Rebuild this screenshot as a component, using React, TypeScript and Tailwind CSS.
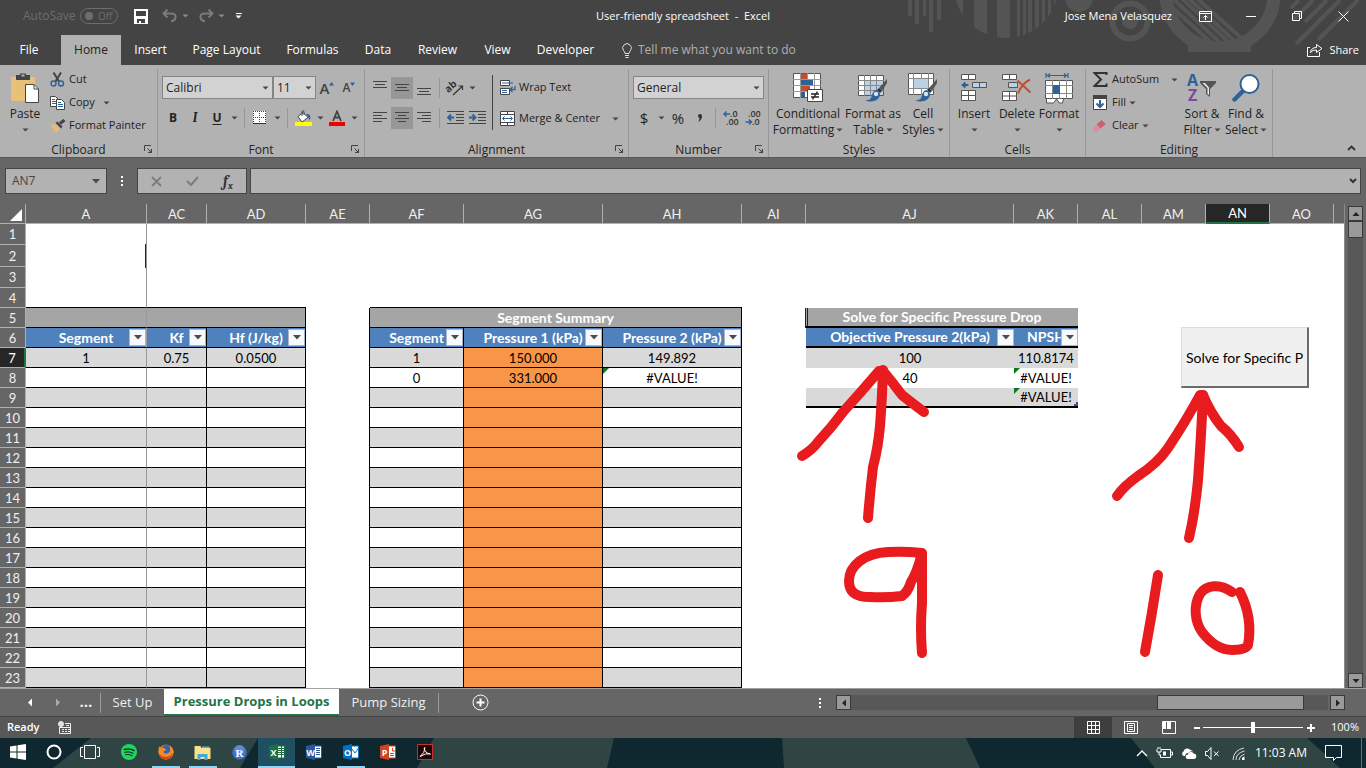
import React from "react";

type Kids = { children?: React.ReactNode };

const Caret = ({ className = "text-[#444]" }: { className?: string }) => (
  <svg width="7" height="4" viewBox="0 0 7 4" className={`shrink-0 ${className}`}>
    <path d="M0.5 0.5h6L3.5 3.5z" fill="currentColor" />
  </svg>
);

const WideCaret = () => (
  <svg width="8" height="5" viewBox="0 0 8 5" className="shrink-0">
    <path d="M0 0h8L4 4.500z" fill="#4a4a4a" />
  </svg>
);

const CaretButton = ({ label }: { label: string }) => (
  <button aria-label={label} className="flex h-[22px] w-3 items-center justify-center">
    <Caret />
  </button>
);

const ToolButton = ({ label, active, children }: Kids & { label: string; active?: boolean }) => (
  <button
    aria-label={label}
    className={`flex h-[22px] w-[22px] items-center justify-center ${active ? "bg-[#979797]" : ""}`}
  >
    {children}
  </button>
);

const Sep = () => <span className="mx-1 h-5 w-px shrink-0 bg-[#979797]" />;

const Group = ({
  label,
  width,
  launcher,
  children,
}: Kids & { label: string; width: string; launcher?: boolean }) => (
  <section aria-label={label} className={`flex shrink-0 flex-col ${width}`}>
    <div className="flex flex-1">
      <div className="flex min-w-0 flex-1">{children}</div>
      <span className="mt-1 w-px bg-[#989898]" />
    </div>
    <div className="flex h-[17px] items-center border-r border-[#989898] pt-[2px]">
      <span className="w-4" />
      <span className="flex-1 text-center leading-4">{label}</span>
      <span className="flex w-4 items-center">
        {launcher && (
          <button aria-label={`${label} settings`}>
            <svg width="9" height="9" viewBox="0 0 9 9" fill="none" stroke="#444" className="ml-[3px]">
              <path d="M0.5 6V0.5H7M3.5 3.5l4 4M7.5 4v3.5H4" />
              <path d="M8 4.5V8H4.5z" fill="#444" stroke="none" />
            </svg>
          </button>
        )}
      </span>
    </div>
  </section>
);

const BigButton = ({
  icon,
  lines,
  width,
}: {
  icon: React.ReactNode;
  lines: [string, string?];
  width: string;
}) => (
  <button className={`flex shrink-0 flex-col items-center pt-[7px] ${width}`}>
    <span className="flex h-8 items-center justify-center">{icon}</span>
    <span className="mt-[2px] h-4 leading-4 whitespace-nowrap">{lines[0]}</span>
    <span className="flex h-4 items-center gap-[2px] leading-4 whitespace-nowrap">
      {lines[1]}
      <Caret />
    </span>
  </button>
);

const RowButton = ({ icon, label, caret }: { icon: React.ReactNode; label: string; caret?: string }) => (
  <button className="flex h-[23px] items-center text-[11px] whitespace-nowrap">
    <span className="flex w-[19px] justify-start">{icon}</span>
    {label}
    {caret && (
      <span className={caret}>
        <Caret />
      </span>
    )}
  </button>
);

const Lines = ({ rows }: { rows: [number, number, number][] }) => (
  <svg width="14" height="14" viewBox="0 0 14 14" stroke="#444">
    {rows.map(([x1, x2, y]) => (
      <path key={y} d={`M${x1} ${y + 0.5}H${x2}`} />
    ))}
  </svg>
);

/* ---------- ribbon icons ---------- */

const PasteIcon = () => (
  <svg width="30" height="32" viewBox="0 0 30 32">
    <path d="M1 5h24v24H1z" fill="#e8c078" />
    <path d="M6 3h4V1.500h6V3h4v5H6z" fill="#444" />
    <path d="M11.500 2.500h3v2h-3z" fill="#b2b2b2" />
    <path d="M15.500 12.500h8.500l4.500 4.500v13.500h-13z" fill="#fff" stroke="#444" />
    <path d="M24 12.500V17h4.500" fill="none" stroke="#444" />
  </svg>
);

const CutIcon = () => (
  <svg width="15" height="15" viewBox="0 0 15 15" fill="none">
    <path d="M3.500 0.500l5.500 9M11 0.500L5.500 9.500" stroke="#444" strokeWidth="2" />
    <circle cx="3.500" cy="11.500" r="2.500" stroke="#2e6197" strokeWidth="1.400" />
    <circle cx="11" cy="11.500" r="2.500" stroke="#2e6197" strokeWidth="1.400" />
  </svg>
);

const CopyIcon = () => (
  <svg width="15" height="14" viewBox="0 0 15 14">
    <path d="M0.500 0.500h5l2.500 2.500v7.500h-7.500z" fill="#fff" stroke="#444" />
    <path d="M2 3.500h3M2 5.500h4M2 7.500h4" stroke="#2e6197" />
    <path d="M6.500 3.500h5l3 3v7h-8z" fill="#fff" stroke="#444" />
    <path d="M8 6.500h3M8 8.500h5M8 10.500h5" stroke="#2e6197" />
  </svg>
);

const PainterIcon = () => (
  <svg width="16" height="14" viewBox="0 0 16 14">
    <path d="M0 6l6-1 4 5-4 4z" fill="#e8b877" />
    <path d="M5.500 4l2-1.500 5 5-1.500 2z" fill="#444" />
    <path d="M10 4.500L14.500 1" stroke="#444" strokeWidth="3" />
  </svg>
);

const BucketIcon = () => (
  <svg width="17" height="16" viewBox="0 0 17 16">
    <path d="M3 6.500l5-4 5 5-6 4.500z" fill="#fff" stroke="#444" />
    <path d="M7 6V1.500q1-1.500 2 0V5" fill="none" stroke="#444" />
    <path d="M11 4c4-.5 5 2 4 6-1.500-1-1.500-3-4-6z" fill="#2e6197" />
    <path d="M0 12h17v4H0z" fill="#ffff00" />
  </svg>
);

const FontColorIcon = () => (
  <svg width="16" height="16" viewBox="0 0 16 16">
    <path d="M4 11L8 1.500 12 11M5.500 7.500h5" fill="none" stroke="#444" strokeWidth="1.800" />
    <path d="M0 12h16v4H0z" fill="#f00000" />
  </svg>
);

const BorderIcon = () => (
  <svg width="14" height="14" viewBox="0 0 14 14">
    <path d="M0 0h13v12H0z" fill="#fff" />
    <path d="M0.500 0v12M6.500 0v12M12.500 0v12M0 0.500h13M0 6.500h13" stroke="#444" strokeDasharray="1 1" />
    <path d="M0 12.500h13" stroke="#333" />
  </svg>
);

const OrientIcon = () => (
  <svg width="18" height="17" viewBox="0 0 18 17" className="overflow-visible">
    <text x="0" y="12" fontSize="10" fontWeight="700" fill="#333" fontFamily="Open Sans, sans-serif" transform="rotate(-42 4 10)">
      ab
    </text>
    <path d="M7 16l9-8.500M12.500 7h4v4" stroke="#333" strokeWidth="1.200" fill="none" />
  </svg>
);

const IndentIcon = ({ right }: { right?: boolean }) => (
  <svg width="17" height="14" viewBox="0 0 17 14" fill="none">
    <path d="M0 .5h17M9 3.500h8M9 6.500h8M9 9.500h8M0 12.500h17" stroke="#444" />
    <path d={right ? "M0 6.500h6M3.500 3.500l3 3-3 3" : "M1 6.500h6M4 3.500l-3 3 3 3"} stroke="#2e6197" strokeWidth="1.800" />
  </svg>
);

const WrapIcon = () => (
  <svg width="16" height="16" viewBox="0 0 16 16">
    <path d="M0.500 0.500h9v5h-9zM0.500 8.500h9v6h-9z" fill="#fff" stroke="#444" />
    <path d="M2 3h11M2 10.500h5M2 12.500h5" stroke="#2e6197" />
    <path d="M15 6v3.500H10.500M12.500 7l-2.500 2.500 2.500 2.500" fill="none" stroke="#2e6197" strokeWidth="1.300" />
  </svg>
);

const MergeIcon = () => (
  <svg width="16" height="15" viewBox="0 0 16 15">
    <path d="M0.500 0.500h14v14h-14z" fill="#fff" stroke="#444" />
    <path d="M0 3.500h15M0 11.500h15M7.500 0v3.500M7.500 11.500V15" stroke="#444" />
    <path d="M2.500 7.500h10M4.500 5.500l-2 2 2 2M10.500 5.500l2 2-2 2" fill="none" stroke="#2e6197" />
  </svg>
);

const DecimalIcon = ({ more }: { more?: boolean }) => (
  <svg width="16" height="16" viewBox="0 0 16 16" fontFamily="Open Sans, sans-serif" fontSize="9" fontWeight="600" fill="#333">
    <text x={more ? 7 : 3} y="7">{more ? ".0" : ".00"}</text>
    <text x={more ? 3 : 7} y="15">{more ? ".00" : ".0"}</text>
    <path
      d={more ? "M1 4h6M3.500 1.500L1 4l2.500 2.500" : "M0.500 12h6M4 9.500L6.500 12 4 14.500"}
      fill="none"
      stroke="#2e6197"
      strokeWidth="1.400"
    />
  </svg>
);

const ConditionalIcon = () => (
  <svg width="30" height="30" viewBox="0 0 30 30">
    <path d="M0.500 0.500h27v24h-27z" fill="#fff" stroke="#555" />
    <path d="M7.500 0v25M14.500 0v25M21.500 0v25M0 6.500h28M0 12.500h28M0 18.500h28" stroke="#999" />
    <path d="M8 1h6v5H8zM8 13h9v5H8z" fill="#c0502c" />
    <path d="M8 7h12v5H8zM8 19h4v5H8z" fill="#2e6197" />
    <path d="M14.500 16.500h15v12h-15z" fill="#fff" stroke="#444" />
    <path d="M18 21h8M18 24h8M24.500 18.500l-5 8" stroke="#222" strokeWidth="1.400" />
  </svg>
);

const Brush = () => (
  <>
    <path d="M29 6l-8 9 3 3 5-8z" fill="#555" />
    <path d="M21 15l-2 2 3 3 2-2z" fill="#333" />
    <path d="M19 17c-4 0-4 3-6 8-1 2-3 2-6 2.500 6 2 15 1 15-7z" fill="#2e6197" />
    <circle cx="18" cy="21" r="2.200" fill="#d5e4f2" />
  </>
);

const FormatTableIcon = () => (
  <svg width="30" height="30" viewBox="0 0 30 30">
    <path d="M0.500 2.500h25v20h-25z" fill="#fff" stroke="#555" />
    <path d="M7 8h18v14H7z" fill="#bcd0e6" />
    <path d="M6.500 2v21M12.500 2v21M18.500 2v21M0 7.500h26M0 12.500h26M0 17.500h26" stroke="#888" />
    <Brush />
  </svg>
);

const CellStylesIcon = () => (
  <svg width="30" height="30" viewBox="0 0 30 30">
    <path d="M0.500 0.500h25v21h-25z" fill="#fff" stroke="#555" />
    <path d="M5.500 0v22M20.500 0v22M0 5.500h26M0 15.500h26M13.500 0v5M13.500 16v6" stroke="#888" />
    <path d="M6 6h14v9H6z" fill="#bcd0e6" />
    <Brush />
  </svg>
);

const InsertIcon = () => (
  <svg width="28" height="28" viewBox="0 0 28 28">
    <path d="M1.500 0.500h14v5h-14zM1.500 16.500h14v10h-14z" fill="#fff" stroke="#555" />
    <path d="M8.500 0v5M8.500 16v11M1 21.500h15" stroke="#555" />
    <path d="M12.500 8.500h14v5h-14z" fill="#bcd0e6" stroke="#555" />
    <path d="M19.500 8v6" stroke="#555" />
    <path d="M2.500 11h6M5.500 8.500L2.500 11l3 2.500" fill="none" stroke="#2e6197" strokeWidth="1.800" />
  </svg>
);

const DeleteIcon = () => (
  <svg width="30" height="28" viewBox="0 0 30 28">
    <path d="M0.500 0.500h14v5h-14zM0.500 17.500h14v9h-14z" fill="#fff" stroke="#555" />
    <path d="M7.500 0v5M7.500 17v10M0 22h15" stroke="#555" />
    <path d="M6.500 8.500h9v5h-9z" fill="#bcd0e6" stroke="#555" />
    <path d="M15.500 6.500l13 12M28 5.500q-8 4-12 14" fill="none" stroke="#c0502c" strokeWidth="2" />
  </svg>
);

const FormatIcon = () => (
  <svg width="28" height="31" viewBox="0 0 28 31">
    <path d="M1 0v5M23 0v5M2 2.500h20M5 0.500L2.500 2.500 5 4.500M19 0.500l2.500 2-2.500 2" fill="none" stroke="#2e6197" strokeWidth="1.200" />
    <path d="M0.500 7.500h27v18h-27z" fill="#fff" stroke="#555" />
    <path d="M7.500 7v19M14.500 7v19M21.500 7v19M0 12.500h28M0 20.500h28" stroke="#888" />
    <path d="M8 12h7v9H8z" fill="#2e6197" />
    <path d="M1.500 26v4h7l3-4 3 4h3l1-4" fill="#fff" stroke="#555" />
  </svg>
);

const SigmaIcon = () => (
  <svg width="16" height="15" viewBox="0 0 16 15">
    <path d="M13.500 3V1H1.500l6.500 6.500L1.500 14h12v-2.500" fill="none" stroke="#333" strokeWidth="2" />
  </svg>
);

const FillIcon = () => (
  <svg width="14" height="15" viewBox="0 0 14 15">
    <path d="M0.500 0.500h13v14h-13z" fill="#fff" stroke="#444" />
    <path d="M0 0h14v4H0z" fill="#444" />
    <path d="M7 5v7M3.500 8.500L7 12l3.500-3.500" fill="none" stroke="#2e6197" strokeWidth="2" />
  </svg>
);

const ClearIcon = () => (
  <svg width="14" height="12" viewBox="0 0 14 12">
    <path d="M0 8l3-3 4 4-3 3H2z" fill="#dd8a9b" />
    <path d="M3.500 4.500L8.500 0l4.500 4-5.500 4.500z" fill="#cf5f78" />
  </svg>
);

const SortIcon = () => (
  <svg width="30" height="30" viewBox="0 0 30 30" fontFamily="Open Sans, sans-serif" fontWeight="700">
    <text x="0" y="13" fontSize="16" fill="#2e6197">A</text>
    <text x="1" y="28" fontSize="16" fill="#7b4a9c">Z</text>
    <path d="M13 8h16v2l-6 6v8l-4-3v-5l-6-6z" fill="#555" />
    <path d="M15.500 10l5 5v6l1.500 1v-7.500l-4-4.500z" fill="#e8e8e8" />
  </svg>
);

const FindIcon = () => (
  <svg width="28" height="28" viewBox="0 0 28 28">
    <path d="M2.500 25.500l9-9" stroke="#2e6197" strokeWidth="4.500" strokeLinecap="round" />
    <circle cx="17.500" cy="10" r="9" fill="#fff" stroke="#2e6197" strokeWidth="2" />
  </svg>
);

/* ---------- sections ---------- */

const TitleArt = () => (
  <svg className="pointer-events-none absolute top-0 right-0" width="466" height="65" viewBox="900 0 466 65">
    <defs>
      <clipPath id="disc"><circle cx="1006" cy="-14" r="52" /></clipPath>
      <clipPath id="ringArea"><path d="M1100 0h266v52h-266z" /></clipPath>
      <clipPath id="innerDisc"><circle cx="1220" cy="-6" r="53" /></clipPath>
    </defs>
    <g fill="#545454">
      <path d="M908 0h4v16h-4zM915 0h4v24h-4zM923 0h3v16h-3zM929 0h4v32h-4zM937 0h4v20h-4z" />
      <g clipPath="url(#disc)">
        <path d="M954 0h9v40h-9zM974 0h13v40h-13zM997 0h13v40h-13zM1017 0h3v40h-3zM1023 0h3v40h-3zM1028 0h4v40h-4zM1035 0h4v40h-4zM1042 0h3v40h-3zM1048 0h3v40h-3zM1054 0h4v40h-4z" />
      </g>
      <circle cx="1079" cy="-2" r="14" />
      <circle cx="1130" cy="21" r="8" />
    </g>
    <g fill="none" stroke="#545454">
      <circle cx="1130" cy="21" r="17.500" strokeWidth="6" />
      <g clipPath="url(#ringArea)">
        <circle cx="1220" cy="-6" r="54" strokeWidth="13" />
        <path d="M1188 46h63v6h-63z" fill="#545454" stroke="none" />
      </g>
      <g clipPath="url(#innerDisc)" strokeWidth="4">
        <path d="M1164 0l60 54M1170 -4l60 56M1177 -6l60 56M1184 -6l58 54M1192 -6l56 50" />
      </g>
      <path d="M1291 8l8-8M1293 20l20-20M1305 22l22-22M1318 22l22-22M1296 44l44-44M1318 40l40-40" strokeWidth="4" />
    </g>
  </svg>
);

const TitleBar = () => (
  <div className="relative grid h-[35px] grid-cols-[1fr_auto_1fr] items-center pb-[3px] text-white">
    <div className="flex h-full items-center pl-[23px] text-[#6d6d6d]">
      <span className="w-[57px] text-[12px]">AutoSave</span>
      <button aria-label="AutoSave off" className="flex h-4 w-[38px] items-center gap-[5px] rounded-full border border-[#6d6d6d] pl-1 text-[10px]">
        <span className="h-2 w-2 rounded-full bg-[#6d6d6d]" />
        Off
      </button>
      <button aria-label="Save" className="ml-4">
        <svg width="14" height="15" viewBox="0 0 14 15">
          <path d="M0 0h14v15H0z" fill="#fff" />
          <path d="M2 2h10v5H2zM3 10h8v4H7v-2H5v2H3z" fill="#444" />
        </svg>
      </button>
      <button aria-label="Undo" className="ml-[14px]">
        <svg width="16" height="14" viewBox="0 0 16 14" fill="none" stroke="#7b7b7b" strokeWidth="2">
          <path d="M5.500 0.500L1.500 4.500l4 4M2 4.500h7q5 0 4.500 4-.5 3-4.500 4" />
        </svg>
      </button>
      <button aria-label="Undo history" className="ml-1"><Caret className="text-[#8c8c8c]" /></button>
      <button aria-label="Redo" className="ml-[9px]">
        <svg width="16" height="14" viewBox="0 0 16 14" fill="none" stroke="#7b7b7b" strokeWidth="2">
          <path d="M10.500 0.500l4 4-4 4M14 4.500H7q-5 0-4.500 4 .5 3 4.500 4" />
        </svg>
      </button>
      <button aria-label="Redo history" className="ml-1"><Caret className="text-[#8c8c8c]" /></button>
      <button aria-label="Customize toolbar" className="ml-[10px] flex flex-col items-center gap-px text-white">
        <span className="h-px w-[6px] bg-white" />
        <Caret className="text-white" />
      </button>
    </div>
    <h1 className="text-[11px] whitespace-pre">User-friendly spreadsheet  -  Excel</h1>
    <div className="flex h-full items-center justify-end">
      <span className="mr-[10px] text-[11px]">Jose Mena Velasquez</span>
      <button aria-label="Ribbon display options" className="flex h-full w-[46px] items-center justify-center">
        <svg width="13" height="11" viewBox="0 0 13 11" fill="none" stroke="#fff">
          <path d="M0.500 0.500h12v10H0.500zM0 2.500h13M6.500 9V4.500M4.500 6.500l2-2 2 2" />
        </svg>
      </button>
      <button aria-label="Minimize" className="flex h-full w-[46px] items-center justify-center">
        <span className="h-px w-[10px] bg-white" />
      </button>
      <button aria-label="Restore" className="flex h-full w-[46px] items-center justify-center">
        <svg width="10" height="10" viewBox="0 0 10 10" fill="none" stroke="#fff">
          <path d="M0.500 2.500h7v7h-7zM2.500 2.500v-2h7v7h-2" />
        </svg>
      </button>
      <button aria-label="Close" className="flex h-full w-[46px] items-center justify-center">
        <svg width="11" height="11" viewBox="0 0 11 11" fill="none" stroke="#fff">
          <path d="M0.500 0.500l10 10M10.500 0.500l-10 10" />
        </svg>
      </button>
    </div>
  </div>
);

const TABS: [string, string][] = [
  ["Insert", "w-[59px]"],
  ["Page Layout", "w-[93px]"],
  ["Formulas", "w-[79px]"],
  ["Data", "w-[52px]"],
  ["Review", "w-[67px]"],
  ["View", "w-[53px]"],
  ["Developer", "w-[83px]"],
];

const TabBar = () => (
  <nav className="relative flex h-[30px] items-center text-[12px] text-white">
    <button className="mr-[3px] w-[58px]">File</button>
    <button className="h-full w-[60px] bg-[#b2b2b2] text-[#222]">Home</button>
    {TABS.map(([t, w]) => (
      <button key={t} className={`whitespace-nowrap ${w}`}>{t}</button>
    ))}
    <svg className="ml-[14px]" width="12" height="15" viewBox="0 0 12 15" fill="none" stroke="#e0e0e0">
      <path d="M4 10.500Q4 9 2.500 7.500a4.300 4.300 0 1 1 7 0Q8 9 8 10.500zM4 12.500h4M4.500 14.500h3" />
    </svg>
    <input aria-label="Tell me what you want to do" placeholder="Tell me what you want to do" className="ml-[5px] w-44 bg-transparent outline-none placeholder:text-[#b0b0b0] placeholder:opacity-100" />
    <button className="mr-[7px] ml-auto flex items-center gap-[6px]">
      <svg width="16" height="14" viewBox="0 0 16 14" fill="none" stroke="#fff">
        <path d="M3 4.500H0.500v9h12V9M3.500 9.500q.5-5 6-5V1.500l5.500 4-5.500 4V7q-4-.5-6 2.500z" />
      </svg>
      <span className="text-[11px]">Share</span>
    </button>
  </nav>
);

const field =
  "h-full w-full appearance-none rounded-none border border-[#858585] bg-[#d2d2d2] py-0 pl-[3px] text-[12px] leading-4 text-[#222] outline-none";

const Select = ({ label, value, width }: { label: string; value: string; width: string }) => (
  <label className={`relative flex h-[23px] items-center ${width}`}>
    <span className="sr-only">{label}</span>
    <select className={field} defaultValue={value}>
      <option>{value}</option>
    </select>
    <span className="pointer-events-none absolute right-1"><Caret /></span>
  </label>
);

const Ribbon = () => (
  <div className="flex h-[93px] border-b border-[#585858] bg-[#b2b2b2] text-[12px] text-[#222]">
    <Group label="Clipboard" width="w-[158px]" launcher>
      <BigButton icon={<PasteIcon />} lines={["Paste"]} width="w-[50px]" />
      <div className="flex flex-col pt-[3px]">
        <RowButton icon={<CutIcon />} label="Cut" />
        <RowButton icon={<CopyIcon />} label="Copy" caret="ml-2" />
        <RowButton icon={<PainterIcon />} label="Format Painter" />
      </div>
    </Group>

    <Group label="Font" width="w-[207px]" launcher>
      <div className="flex flex-col gap-[8px] pt-[11px] pl-1">
        <div className="flex items-center">
          <Select label="Font name" value="Calibri" width="w-[111px]" />
          <Select label="Font size" value="11" width="w-[43px]" />
          <ToolButton label="Increase font size">
            <span className="text-[15px] leading-4 font-semibold text-[#444]">A</span>
            <svg className="mb-2" width="5" height="4" viewBox="0 0 5 4"><path d="M0 3.500L2.500 0 5 3.500z" fill="#2e6197" /></svg>
          </ToolButton>
          <ToolButton label="Decrease font size">
            <span className="text-[12px] leading-4 font-semibold text-[#444]">A</span>
            <svg className="mb-2" width="5" height="4" viewBox="0 0 5 4"><path d="M0 0.500h5L2.500 4z" fill="#2e6197" /></svg>
          </ToolButton>
        </div>
        <div className="flex items-center">
          <ToolButton label="Bold"><b>B</b></ToolButton>
          <ToolButton label="Italic"><i className="font-serif text-[13px] font-bold">I</i></ToolButton>
          <ToolButton label="Underline"><b className="underline underline-offset-2">U</b></ToolButton>
          <CaretButton label="Underline styles" />
          <Sep />
          <ToolButton label="Borders"><BorderIcon /></ToolButton>
          <CaretButton label="Border styles" />
          <Sep />
          <ToolButton label="Fill color"><BucketIcon /></ToolButton>
          <CaretButton label="Fill colors" />
          <ToolButton label="Font color"><FontColorIcon /></ToolButton>
          <CaretButton label="Font colors" />
        </div>
      </div>
    </Group>

    <Group label="Alignment" width="w-[264px]" launcher>
      <div className="flex flex-col gap-[8px] pt-[11px] pl-1">
        <div className="flex h-[23px] items-center">
          <ToolButton label="Top align"><Lines rows={[[0, 14, 0], [2, 12, 3], [0, 14, 6]]} /></ToolButton>
          <ToolButton label="Middle align" active><Lines rows={[[0, 14, 3], [2, 12, 6], [0, 14, 9]]} /></ToolButton>
          <ToolButton label="Bottom align"><Lines rows={[[0, 14, 7], [2, 12, 10], [0, 14, 13]]} /></ToolButton>
          <Sep />
          <ToolButton label="Orientation"><OrientIcon /></ToolButton>
          <CaretButton label="Orientation options" />
        </div>
        <div className="flex items-center">
          <ToolButton label="Align left"><Lines rows={[[0, 14, 1], [0, 9, 4], [0, 14, 7], [0, 9, 10]]} /></ToolButton>
          <ToolButton label="Center" active><Lines rows={[[0, 14, 1], [3, 11, 4], [0, 14, 7], [3, 11, 10]]} /></ToolButton>
          <ToolButton label="Align right"><Lines rows={[[0, 14, 1], [5, 14, 4], [0, 14, 7], [5, 14, 10]]} /></ToolButton>
          <Sep />
          <ToolButton label="Decrease indent"><IndentIcon /></ToolButton>
          <ToolButton label="Increase indent"><IndentIcon right /></ToolButton>
        </div>
      </div>
      <span className="mt-[10px] ml-1 h-[55px] w-px bg-[#444]" />
      <div className="flex flex-col gap-[8px] pt-[11px] pl-[7px]">
        <RowButton icon={<WrapIcon />} label="Wrap Text" />
        <RowButton icon={<MergeIcon />} label="Merge & Center" caret="ml-3" />
      </div>
    </Group>

    <Group label="Number" width="w-[140px]" launcher>
      <div className="flex flex-col gap-[8px] pt-[11px] pl-1">
        <Select label="Number format" value="General" width="w-[131px]" />
        <div className="flex items-center">
          <ToolButton label="Currency"><span className="text-[15px]">$</span></ToolButton>
          <CaretButton label="Currency options" />
          <ToolButton label="Percent"><span className="text-[15px]">%</span></ToolButton>
          <ToolButton label="Comma style">
            <svg width="6" height="8" viewBox="0 0 6 8"><path d="M1 2a2 2 0 0 1 4 0q0 4-4 6 1.500-2 1.500-4A2 2 0 0 1 1 2z" fill="#333" /></svg>
          </ToolButton>
          <Sep />
          <ToolButton label="Increase decimal"><DecimalIcon more /></ToolButton>
          <ToolButton label="Decrease decimal"><DecimalIcon /></ToolButton>
        </div>
      </div>
    </Group>

    <Group label="Styles" width="w-[181px]">
      <BigButton icon={<ConditionalIcon />} lines={["Conditional", "Formatting"]} width="w-[78px]" />
      <BigButton icon={<FormatTableIcon />} lines={["Format as", "Table"]} width="w-[52px]" />
      <BigButton icon={<CellStylesIcon />} lines={["Cell", "Styles"]} width="w-[48px]" />
    </Group>

    <Group label="Cells" width="w-[136px]">
      <BigButton icon={<InsertIcon />} lines={["Insert"]} width="w-[48px]" />
      <BigButton icon={<DeleteIcon />} lines={["Delete"]} width="w-[38px]" />
      <BigButton icon={<FormatIcon />} lines={["Format"]} width="w-[46px]" />
    </Group>

    <Group label="Editing" width="w-[187px]">
      <div className="flex w-[94px] flex-col pt-[3px] pl-[7px]">
        <RowButton icon={<SigmaIcon />} label="AutoSum" caret="ml-3" />
        <RowButton icon={<FillIcon />} label="Fill" caret="ml-[3px]" />
        <RowButton icon={<ClearIcon />} label="Clear" caret="ml-[3px]" />
      </div>
      <BigButton icon={<SortIcon />} lines={["Sort &", "Filter"]} width="w-[44px]" />
      <BigButton icon={<FindIcon />} lines={["Find &", "Select"]} width="w-[44px]" />
    </Group>

    <button aria-label="Collapse ribbon" className="mt-auto mr-[10px] mb-[6px] ml-auto">
      <svg width="9" height="6" viewBox="0 0 9 6" fill="none" stroke="#333" strokeWidth="1.800">
        <path d="M1 5l3.500-3.500L8 5" />
      </svg>
    </button>
  </div>
);

const Dots = () => (
  <span className="flex flex-col gap-[2px]">
    {[0, 1, 2].map((i) => (
      <i key={i} className="h-[2px] w-[2px] bg-white" />
    ))}
  </span>
);

const box = "flex h-[26px] items-center border border-[#444] bg-[#b2b2b2]";

const FormulaBar = () => (
  <div className="flex h-[46px] items-center bg-[#666] pr-[5px] pl-[5px]">
    <div className={`w-[102px] ${box}`}>
      <input aria-label="Name box" defaultValue="AN7" className="w-[86px] bg-transparent pl-[6px] text-[12px] text-[#444] outline-none" />
      <button aria-label="Named ranges" className="flex h-full flex-1 items-center"><WideCaret /></button>
    </div>
    <span className="flex w-[30px] justify-center"><Dots /></span>
    <div className={`w-[110px] ${box}`}>
      <button aria-label="Cancel" className="flex w-9 justify-center">
        <svg width="11" height="11" viewBox="0 0 11 11" stroke="#7c7c7c" strokeWidth="1.800"><path d="M1 1l9 9M10 1l-9 9" /></svg>
      </button>
      <button aria-label="Enter" className="flex w-9 justify-center">
        <svg width="13" height="10" viewBox="0 0 13 10" fill="none" stroke="#7c7c7c" strokeWidth="2"><path d="M1 5l4 4 7-8" /></svg>
      </button>
      <button aria-label="Insert function" className="flex-1 font-serif text-[15px] leading-4 font-bold text-[#333] italic">
        f<sub className="text-[10px]">x</sub>
      </button>
    </div>
    <div className={`ml-[3px] flex-1 ${box}`}>
      <input aria-label="Formula" className="min-w-0 flex-1 bg-transparent px-2 text-[12px] outline-none" />
      <button aria-label="Expand formula bar" className="px-[3px]">
        <svg width="8" height="6" viewBox="0 0 8 6" fill="none" stroke="#333" strokeWidth="2"><path d="M1 1l3 3 3-3" /></svg>
      </button>
    </div>
  </div>
);

/* ---------- sheet ---------- */

const COLS: [string, string][] = [
  ["A", "w-[121px]"],
  ["AC", "w-[60px]"],
  ["AD", "w-[99px]"],
  ["AE", "w-[64px]"],
  ["AF", "w-[94px]"],
  ["AG", "w-[139px]"],
  ["AH", "w-[139px]"],
  ["AI", "w-[64px]"],
  ["AJ", "w-[208px]"],
  ["AK", "w-[64px]"],
  ["AL", "w-[64px]"],
  ["AM", "w-[64px]"],
  ["AN", "w-[64px]"],
  ["AO", "w-[64px]"],
];

const HEADERS: Record<string, string> = {
  A: "Segment",
  AC: "Kf",
  AD: "Hf (J/kg)",
  AF: "Segment",
  AG: "Pressure 1 (kPa)",
  AH: "Pressure 2 (kPa)",
  AJ: "Objective Pressure 2(kPa)",
  AK: "NPSH",
};

const DATA: Record<number, Record<string, string>> = {
  7: { A: "1", AC: "0.75", AD: "0.0500", AF: "1", AG: "150.000", AH: "149.892", AJ: "100", AK: "110.8174" },
  8: { AF: "0", AG: "331.000", AH: "#VALUE!", AJ: "40", AK: "#VALUE!" },
  9: { AK: "#VALUE!" },
};

const GRID_COLS = ["A", "AC", "AD", "AF", "AG", "AH"];
const SOLVE_COLS = ["AJ", "AK"];

const rowHeight = (r: number) => (r === 2 ? "h-[22px]" : r === 1 || r === 3 ? "h-[21px]" : "h-5");

function cellClass(row: number, col: string) {
  const c: string[] = ["relative p-0 text-center whitespace-nowrap"];
  const inGrid = GRID_COLS.includes(col);
  const inSolve = SOLVE_COLS.includes(col);
  if (col === "A") c.push("border-r border-r-[#999]");
  else if (row >= 5 && (inGrid || col === "AE")) c.push("border-r border-r-black");
  if (inGrid && row >= 4) c.push("border-b border-b-black");
  if (inSolve && (row === 6 || row === 9)) c.push("border-b-2 border-b-black");
  if (row === 6 && (inGrid || inSolve)) c.push("bg-[#4f81bd] text-[14px] font-bold text-white");
  if (row >= 7) {
    if (col === "AG") c.push("bg-[#f79646]");
    else if ((inGrid || (inSolve && row <= 9)) && row % 2 === 1) c.push("bg-[#d9d9d9]");
  }
  return c.join(" ");
}

const FilterButton = ({ label }: { label: string }) => (
  <button aria-label={`Filter ${label}`} className="absolute top-px right-0 flex h-[17px] w-[17px] items-center justify-center border border-[#a9b6cc] bg-[#f8f9fc]">
    <WideCaret />
  </button>
);

const Cell = ({ row, col }: { row: number; col: string }) => {
  const text = row === 6 ? HEADERS[col] : DATA[row]?.[col];
  return (
    <td className={cellClass(row, col)}>
      {text}
      {row === 6 && text && <FilterButton label={text} />}
      {text === "#VALUE!" && (
        <svg className="absolute top-0 left-0" width="6" height="6" viewBox="0 0 6 6"><path d="M0 0h6L0 6z" fill="#0a7a1e" /></svg>
      )}
      {row === 2 && col === "A" && <span className="absolute -top-px right-0 h-6 w-px bg-[#222]" />}
      {row === 9 && col === "AK" && (
        <svg className="absolute right-0 bottom-0" width="4" height="4" viewBox="0 0 4 4"><path d="M2 0h2v4H0V2h2z" fill="#4a4a9c" /></svg>
      )}
    </td>
  );
};

const TitleRowCells = () => (
  <>
    <td className="border-r border-b border-r-[#999] border-b-black bg-[#a5a5a5] p-0" />
    <td colSpan={2} className="border-r border-b border-black bg-[#a5a5a5] p-0" />
    <td className="border-r border-black p-0" />
    <td colSpan={3} className="border-r border-b border-black bg-[#a5a5a5] p-0 text-center text-[14px] font-bold text-white">Segment Summary</td>
    <td className="border-r border-[#222] p-0" />
    <td colSpan={2} className="relative border-b-2 border-black bg-[#a5a5a5] p-0 text-center text-[14px] font-bold text-white">
      <span className="absolute inset-y-0 left-px w-px bg-[#222]" />
      Solve for Specific Pressure Drop
    </td>
    {[0, 1, 2, 3, 4].map((i) => <td key={i} className="p-0" />)}
  </>
);

const Ink = () => (
  <svg className="pointer-events-none absolute top-0 left-0" width="1344" height="484" viewBox="0 204 1344 484" fill="none" stroke="#e81b1e" strokeWidth="10" strokeLinecap="round" strokeLinejoin="round">
    <path d="M802 456Q812 450 818 442Q832 427 843 412Q862 391 879 371" />
    <path d="M883 370Q882 400 880 426Q878 448 873 467Q870 492 868 518" />
    <path d="M883 371Q893 383 902 395Q912 403 924 412" />
    <path d="M1117 496Q1124 486 1138 476Q1158 463 1168 448Q1186 421 1200 395" />
    <path d="M1203 395Q1201 440 1198 480Q1195 512 1189 538" />
    <path d="M1203 395Q1210 412 1221 426Q1231 434 1239 447" />
    <path d="M922 553Q904 551 888 552C864 553 849 566 849 581C849 592 856 597 870 597Q886 598 902 596Q908 592 911 582Q917 573 922 553Q922 580 922 603Q920 628 922 653" />
    <path d="M1158 575Q1152 614 1145 652" />
    <path d="M1232 592C1220 583 1206 585 1200 594C1193 606 1195 622 1202 632Q1216 650 1232 650Q1246 650 1248 645Q1253 618 1240 592" />
  </svg>
);

const scrollBtn = "flex h-[15px] w-[15px] shrink-0 items-center justify-center border border-[#3a3a3a] bg-[#9a9a9a]";

const Arrow = ({ d }: { d: string }) => (
  <svg width="8" height="8" viewBox="0 0 8 8"><path d={d} fill="#222" /></svg>
);

const Sheet = () => (
  <div className="flex flex-1 bg-[#666]">
    <div className="relative min-w-0 flex-1 overflow-hidden border-r border-[#8c8c8c] bg-white">
      <table className="w-full table-fixed border-separate border-spacing-0 font-['Lato',sans-serif] text-[13px] leading-4 text-black">
        <colgroup>
          <col className="w-[26px]" />
          {COLS.map(([c, w]) => <col key={c} className={w} />)}
          <col />
        </colgroup>
        <thead>
          <tr className="h-5 bg-[#666] text-[#f0f0f0]">
            <th aria-label="Select all" className="border-r border-b border-[#b0b0b0] p-0">
              <svg className="mt-[2px] ml-[10px]" width="12" height="12" viewBox="0 0 12 12"><path d="M12 0v12H0z" fill="#fff" /></svg>
            </th>
            {COLS.map(([c]) => (
              <th
                key={c}
                scope="col"
                className={
                  c === "AN"
                    ? "border-r border-b-2 border-r-[#b0b0b0] border-b-[#217346] bg-[#262626] p-0 font-normal text-white"
                    : "border-r border-b border-[#b0b0b0] p-0 font-normal"
                }
              >
                {c}
              </th>
            ))}
            <th className="border-b border-[#b0b0b0] p-0" />
          </tr>
        </thead>
        <tbody>
          {Array.from({ length: 23 }, (_, i) => i + 1).map((row) => (
            <tr key={row} className={rowHeight(row)}>
              <th
                scope="row"
                className={
                  row === 7
                    ? "border-r-2 border-b border-r-[#217346] border-b-[#b0b0b0] bg-[#262626] p-0 font-normal text-white"
                    : "border-r border-b border-[#b0b0b0] bg-[#666] p-0 font-normal text-[#f0f0f0]"
                }
              >
                {row}
              </th>
              {row === 5 ? (
                <TitleRowCells />
              ) : (
                <>
                  {COLS.map(([c]) => <Cell key={c} row={row} col={c} />)}
                  <td className="p-0" />
                </>
              )}
            </tr>
          ))}
        </tbody>
      </table>
      <button className="absolute top-[123px] left-[1181px] h-[61px] w-[128px] overflow-hidden border-t border-r-2 border-b-2 border-l border-t-[#ddd] border-r-[#6b6b6b] border-b-[#6b6b6b] border-l-[#ddd] bg-[#f0f0f0] font-['Lato',sans-serif] text-[14px] whitespace-nowrap text-black">
        Solve for Specific P
      </button>
      <Ink />
    </div>
    <div className="flex w-[21px] flex-col items-center pt-[2px]">
      <button aria-label="Scroll up" className={scrollBtn}><Arrow d="M0.500 6L4 2l3.500 4z" /></button>
      <div className="flex w-[15px] flex-1 flex-col bg-[#585858]">
        <span className="h-[17px] border border-[#3a3a3a] bg-[#9a9a9a]" />
      </div>
      <button aria-label="Scroll down" className={scrollBtn}><Arrow d="M0.500 2h7L4 6z" /></button>
    </div>
  </div>
);

const SheetTabs = () => (
  <div className="flex h-7 items-center border-t border-[#a0a0a0] bg-[#666] text-[13px] text-[#f0f0f0]">
    <button aria-label="Previous sheet" className="ml-[26px]"><svg width="8" height="9" viewBox="0 0 8 9"><path d="M6 0.500v8L2 4.500z" fill="#fff" /></svg></button>
    <button aria-label="Next sheet" className="ml-[20px]"><svg width="8" height="9" viewBox="0 0 8 9"><path d="M2 0.500v8L6 4.500z" fill="#aaa" /></svg></button>
    <button aria-label="More sheets" className="ml-[17px] w-[14px] pb-1 text-[15px] leading-4 font-bold">…</button>
    <span className="ml-[7px] h-5 w-px bg-[#999]" />
    <button className="w-[63px]">Set Up</button>
    <button className="h-full w-[175px] self-start border-b-2 border-[#217346] bg-white font-bold whitespace-nowrap text-[#217346]">
      Pressure Drops in Loops
    </button>
    <button className="w-[99px] whitespace-nowrap">Pump Sizing</button>
    <span className="h-5 w-px bg-[#999]" />
    <button aria-label="New sheet" className="ml-[33px]">
      <svg width="17" height="17" viewBox="0 0 17 17" fill="none" stroke="#fff">
        <circle cx="8.500" cy="8.500" r="7.500" />
        <path d="M8.500 4.500v8M4.500 8.500h8" strokeWidth="2" />
      </svg>
    </button>
    <div className="ml-auto flex w-[547px] items-center">
      <Dots />
      <span className="w-[15px]" />
      <button aria-label="Scroll left" className={scrollBtn}><Arrow d="M6 0.500v7L2 4z" /></button>
      <div className="flex h-[15px] flex-1 justify-end bg-[#585858] pr-6">
        <span className="h-full w-[147px] border border-[#3a3a3a] bg-[#9a9a9a]" />
      </div>
      <button aria-label="Scroll right" className={`mr-[21px] ml-[2px] ${scrollBtn}`}><Arrow d="M2 0.500v7L6 4z" /></button>
    </div>
  </div>
);

const StatusBar = () => (
  <div className="flex h-[22px] items-center border-t border-[#444] bg-[#585858] text-[11px] text-white">
    <span className="w-[51px] pl-[7px] font-semibold">Ready</span>
    <button aria-label="Record macro" className="ml-[7px]">
      <svg width="14" height="13" viewBox="0 0 14 13" fill="none" stroke="#eee">
        <path d="M1.500 6v6.500h11v-10H7M1.500 6.500h11M4 8.500h2M7 8.500h2M10 8.500h2M4 10.500h2M7 10.500h2M10 10.500h2M8 4.500h3" />
        <circle cx="3" cy="3" r="2.500" fill="#ddd" />
      </svg>
    </button>
    <div className="ml-auto flex h-full items-center">
      <button aria-label="Normal view" className="flex h-full w-[38px] items-center justify-center bg-[#3e3e3e]">
        <svg width="13" height="13" viewBox="0 0 13 13" fill="none" stroke="#fff"><path d="M0.500 0.500h12v12h-12zM4.500 0v13M8.500 0v13M0 4.500h13M0 8.500h13" /></svg>
      </button>
      <button aria-label="Page layout view" className="flex h-full w-[38px] items-center justify-center">
        <svg width="14" height="13" viewBox="0 0 14 13" fill="none" stroke="#fff"><path d="M0.500 0.500h13v12h-13zM3.500 2.500h7v8h-7zM5 4.500h4M5 6.500h4M5 8.500h4" /></svg>
      </button>
      <button aria-label="Page break view" className="flex h-full w-[38px] items-center justify-center">
        <svg width="14" height="13" viewBox="0 0 14 13" fill="none" stroke="#fff"><path d="M0.500 0.500h13v12h-13z" /><path d="M1 1h3v7H1zM5 1h4v7H5z" fill="#fff" stroke="none" /></svg>
      </button>
      <button aria-label="Zoom out" className="ml-[6px] flex h-4 w-[8px] items-center"><span className="h-[2px] w-[6px] bg-white" /></button>
      <input
        type="range"
        aria-label="Zoom"
        min={0}
        max={200}
        defaultValue={100}
        className="ml-px h-3 w-[100px] appearance-none bg-transparent [&::-webkit-slider-runnable-track]:h-px [&::-webkit-slider-runnable-track]:bg-white [&::-webkit-slider-thumb]:-mt-[5px] [&::-webkit-slider-thumb]:h-[11px] [&::-webkit-slider-thumb]:w-[4px] [&::-webkit-slider-thumb]:appearance-none [&::-webkit-slider-thumb]:bg-white"
      />
      <button aria-label="Zoom in" className="ml-1">
        <svg width="8" height="8" viewBox="0 0 8 8" stroke="#fff" strokeWidth="2"><path d="M4 0v8M0 4h8" /></svg>
      </button>
      <button className="w-[51px] pr-[7px] text-right">100%</button>
    </div>
  </div>
);

const OfficeIcon = ({ letter, color, mark }: { letter: string; color: string; mark: string }) => (
  <svg width="16" height="16" viewBox="0 0 16 16">
    <path d="M8 2h7.500v12H8z" fill="#fff" stroke={color} />
    <path d={mark} stroke={color} fill="none" />
    <path d="M0 2l9-2v16l-9-2z" fill={color} />
    <text x="4.500" y="11.500" textAnchor="middle" fontSize="9" fontWeight="700" fill="#fff" fontFamily="Open Sans, sans-serif">{letter}</text>
  </svg>
);

const TaskButton = ({ label, running, active, width = "w-[37px]", children }: Kids & { label: string; running?: boolean; active?: boolean; width?: string }) => (
  <button aria-label={label} className={`flex h-full flex-col items-center ${width} ${active ? "bg-[#1f5062]" : ""}`}>
    <span className="flex flex-1 items-center">{children}</span>
    <span className={`h-[2px] ${active ? "w-full" : "w-7"} ${running ? "bg-[#8fd3f5]" : ""}`} />
  </button>
);

const Taskbar = () => (
  <footer className="relative flex h-[30px] items-center overflow-hidden bg-[#2f4543] text-white">
    <svg className="pointer-events-none absolute top-0 left-0" width="1366" height="30" viewBox="0 0 1366 30" fill="#0f2830">
      <path d="M0 0h91L53 30H0zM258 0h176l-17 30H240zM614 0h168l2 30H607zM966 0h165l24 30H980zM1307 0h59v30h-26z" />
    </svg>
    <div className="relative flex h-full">
      <TaskButton label="Start" width="w-9">
        <svg width="16" height="16" viewBox="0 0 16 16" fill="#fff"><path d="M0 2.500L6.500 1.500v6H0zM7.500 1.300L16 0v7.500H7.500zM0 8.500h6.500v6L0 13.500zM7.500 8.500H16V16l-8.500-1.300z" /></svg>
      </TaskButton>
      <TaskButton label="Search" width="w-9">
        <svg width="16" height="16" viewBox="0 0 16 16" fill="none" stroke="#fff" strokeWidth="2"><circle cx="8" cy="8" r="6.500" /></svg>
      </TaskButton>
      <TaskButton label="Task view" width="w-9">
        <svg width="20" height="14" viewBox="0 0 20 14" fill="none" stroke="#fff"><path d="M4.500 0.500h11v13h-11zM3 2.500H0.500v9H3M17 2.500h2.500v9H17" /></svg>
      </TaskButton>
      <span className="w-[2px]" />
      <TaskButton label="Spotify">
        <svg width="16" height="16" viewBox="0 0 16 16" fill="none" stroke="#12351f" strokeLinecap="round">
          <circle cx="8" cy="8" r="8" fill="#1ed760" stroke="none" />
          <path d="M3.500 5.500q5-1.500 9.500 1" strokeWidth="1.600" /><path d="M4 8.300q4-1.200 8 1" strokeWidth="1.300" /><path d="M4.500 10.800q3.500-.8 6.500.9" strokeWidth="1.100" />
        </svg>
      </TaskButton>
      <TaskButton label="Firefox" running>
        <svg width="16" height="16" viewBox="0 0 16 16">
          <circle cx="8" cy="8" r="7.500" fill="#e8701c" />
          <circle cx="8.500" cy="6" r="5" fill="#2c67b5" />
          <path d="M1 2.500q2 1.500 4 1l3 2-1 1.500H5.500q0 3 3.500 2.500 4-1 3-5l-.5-3Q16 4 15.500 9q-1 6-7.500 6.500-6-.5-7.500-7Q0.500 4 1 2.500z" fill="#f58a20" />
          <path d="M1 9.500q3 3.500 7 3.500 5-.5 7-4-1 6-7 6.500-5.500-.5-7-6z" fill="#d8401c" />
        </svg>
      </TaskButton>
      <TaskButton label="File Explorer" running>
        <svg width="17" height="15" viewBox="0 0 17 15"><path d="M0.500 1h6l1 2h9v11h-16z" fill="#fbe08d" /><path d="M8 1.500h7.500V3H8z" fill="#4db4e4" /><path d="M3.500 15V9h10v6h-3v-3h-4v3z" fill="#3fa9dd" /></svg>
      </TaskButton>
      <TaskButton label="R">
        <svg width="15" height="15" viewBox="0 0 15 15"><circle cx="7.500" cy="7.500" r="7.200" fill="#3d72c9" /><circle cx="7.500" cy="5" r="5" fill="#6f9ee4" opacity=".6" /><text x="7.500" y="11.500" textAnchor="middle" fontSize="11" fontWeight="700" fill="#fff" fontFamily="Liberation Serif, serif">R</text></svg>
      </TaskButton>
      <TaskButton label="Excel" running active>
        <OfficeIcon letter="X" color="#1d7044" mark="M12.500 2v12M9 4.500h6M9 6.500h6M9 8.500h6M9 10.500h6" />
      </TaskButton>
      <TaskButton label="Word">
        <OfficeIcon letter="W" color="#2a579a" mark="M10 4.500h4M10 6.500h4M10 8.500h4M10 10.500h4" />
      </TaskButton>
      <TaskButton label="Outlook" running>
        <OfficeIcon letter="O" color="#0072c6" mark="M9 5l3 4 3.500-5" />
      </TaskButton>
      <TaskButton label="PowerPoint">
        <OfficeIcon letter="P" color="#d04424" mark="M10 9.500h4M10 11.500h4M12.500 4v3H15" />
      </TaskButton>
      <TaskButton label="Acrobat">
        <svg width="16" height="16" viewBox="0 0 16 16"><path d="M0.500 0.500h15v15H.5z" fill="#230405" stroke="#c8302c" /><path d="M3 12.500Q8 9 8 3.500q-1.500 0-.5 2.500Q9.500 10 13.500 10 9 8.500 3 12.500z" fill="none" stroke="#fff" /></svg>
      </TaskButton>
    </div>
    <div className="relative ml-auto flex items-center">
      <button aria-label="Hidden icons" className="mr-2">
        <svg width="12" height="8" viewBox="0 0 12 8" fill="none" stroke="#fff" strokeWidth="1.300"><path d="M1 7l5-5 5 5" /></svg>
      </button>
      <button aria-label="Battery" className="mr-2">
        <svg width="17" height="12" viewBox="0 0 17 12" fill="none" stroke="#fff"><path d="M5 2.500h9.500v8h-10V8M15 5h1.500v3H15M1 2v3h4V2M2 0v2M4 0v2M3 5v3h2" /><path d="M7 4.500h3v4H7z" fill="#fff" stroke="none" /></svg>
      </button>
      <button aria-label="OneDrive" className="mr-2">
        <svg width="16" height="11" viewBox="0 0 16 11" fill="#fff"><path d="M4 8H2.500a2.500 2.500 0 0 1 0-4.500A4 4 0 0 1 9.500 2 3 3 0 0 1 12 3.500 4 4 0 0 0 7.500 5 3 3 0 0 0 4 8z" /><path d="M7 11a2.300 2.300 0 0 1 0-4.600A3 3 0 0 1 12.500 5.500a2.800 2.800 0 0 1 .8 5.500z" /></svg>
      </button>
      <button aria-label="Volume muted" className="mr-3">
        <svg width="15" height="13" viewBox="0 0 15 13" fill="none" stroke="#fff"><path d="M0.500 4.500h2l3.500-4v12l-3.500-4h-2zM9 4.500l4.500 4.500M13.500 4.500L9 9" /></svg>
      </button>
      <button aria-label="Network" className="mr-[10px]">
        <svg width="13" height="13" viewBox="0 0 13 13" fill="none" stroke="#ddd"><path d="M1 13Q1.500 3 12 1M4 13Q4 6 12.500 4M7 13q0-4 5.500-6" /><path d="M10 13v-2q1-1.500 2.500-1.500V13z" fill="#fff" stroke="none" /></svg>
      </button>
      <time className="text-[12px]">11:03 AM</time>
      <button aria-label="Notifications" className="ml-[18px]">
        <svg width="17" height="16" viewBox="0 0 17 16" fill="none" stroke="#fff"><path d="M0.500 0.500h16v12h-5l-3 3v-3h-8z" /></svg>
      </button>
      <span className="mr-1 ml-[19px] h-[30px] w-px bg-[#5d6f70]" />
    </div>
  </footer>
);

export default function App() {
  return (
    <main className="flex min-h-screen w-full flex-col overflow-hidden bg-[#444] font-['Open_Sans',sans-serif]">
      <header className="relative bg-[#444]">
        <TitleArt />
        <TitleBar />
        <TabBar />
      </header>
      <Ribbon />
      <FormulaBar />
      <Sheet />
      <SheetTabs />
      <StatusBar />
      <Taskbar />
    </main>
  );
}
